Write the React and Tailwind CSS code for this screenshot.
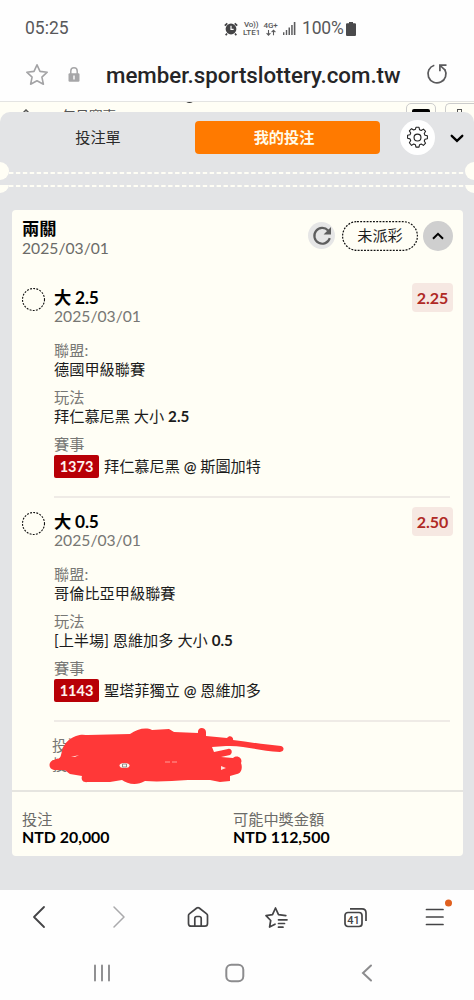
import React from "react";

const Row = ({ h, className = "", children }) => (
  <div className={`flex items-center whitespace-nowrap leading-none ${h} ${className}`}>{children}</div>
);

function StatusBar() {
  return (
    <div className="flex h-[57px] items-center pl-[25px] pr-[118px] font-['Roboto'] text-[#58585a]">
      <span className="pt-[1px] text-[17.500px] leading-none">05:25</span>
      <div className="ml-auto flex items-center">
        <svg width="14" height="14" viewBox="0 0 14 14" className="mr-[5px]">
          <circle cx="7" cy="7" r="5.4" fill="#444446" />
          <path d="M.8 3.6 3.3 1.3M13.2 3.6l-2.5-2.3M3 11.5l-1.3 1.7M11 11.5l1.3 1.7" stroke="#444446" strokeWidth="1.7" fill="none" />
          <path d="M7 3.8v3.5h2.6" stroke="#fff" strokeWidth="1.2" fill="none" />
        </svg>
        <div className="w-[20px] whitespace-nowrap text-[8px] font-medium leading-[8px]">
          <div className="pl-[1px] tracking-[-0.2px]">Vo))</div>
          <div>LTE1</div>
        </div>
        <div className="flex w-[15px] flex-col items-center text-[8px] font-medium leading-[7px] tracking-[-0.2px]">
          <div>4G+</div>
          <svg width="10" height="7" viewBox="0 0 10 7" fill="none" stroke="#58585a" strokeWidth="1.1">
            <path d="M2.5 1v5M.6 4.2l1.9 1.9 1.9-1.9M7.5 6.3v-5M5.6 3.1l1.9-1.9 1.9 1.9" />
          </svg>
        </div>
        <svg width="13" height="13" viewBox="0 0 13 13" className="ml-[5px]" fill="#5c5c5e">
          <path d="M0 10.2h1.4V13H0zM2.8 8h1.4v5H2.8zM5.5 5.5h1.5V13H5.500zM8.2 3h1.500v10H8.200zM10.800 0h1.600v13h-1.600z" />
        </svg>
        <span className="ml-[6px] w-[43px] pt-[1px] text-[17.500px] leading-none tracking-[-0.200px]">100%</span>
        <svg width="10" height="14" viewBox="0 0 9 14" className="ml-[1px]" fill="#4a4a4c" preserveAspectRatio="none">
          <path d="M2.700 0h3.600v1.300H8a1 1 0 0 1 1 1V13a1 1 0 0 1-1 1H1a1 1 0 0 1-1-1V2.300a1 1 0 0 1 1-1h1.700z" />
        </svg>
      </div>
    </div>
  );
}

function AddressBar() {
  return (
    <div className="flex h-[45px] items-start border-b border-[#e4e4e2] pl-[25px]">
      <svg width="24" height="24" viewBox="0 0 24 24" className="mt-[6px]" fill="none" stroke="#a3a3a5" strokeWidth="1.6" strokeLinejoin="round">
        <path d="m12 1.800 3 6.600 7.200.800-5.300 4.900 1.500 7.100L12 17.700l-6.400 3.500 1.500-7.100-5.300-4.900 7.200-.8z" />
      </svg>
      <svg width="12" height="15" viewBox="0 0 12 15" className="ml-[19px] mt-[10px]">
        <path d="M2.800 7V4a3.200 3.200 0 0 1 6.400 0v3" fill="none" stroke="#a6a6a8" strokeWidth="1.500" />
        <rect x="0.500" y="6.300" width="11" height="8.500" rx="1.200" fill="#a6a6a8" />
        <path d="M6 8.500v4" stroke="#fff" strokeWidth="1.400" />
      </svg>
      <span className="ml-[26px] w-[295px] whitespace-nowrap font-['Roboto'] text-[22.300px] font-medium leading-[37px] text-[#252527]">member.sportslottery.com.tw</span>
      <svg width="22" height="22" viewBox="0 0 22 22" className="ml-[25px] mt-[6px]" fill="none" stroke="#5a5a5c" strokeWidth="1.700">
        <path d="M8.300 2.300A9 9 0 1 0 18.800 6.500" />
        <path d="M20.500 2.200h-6.600v6M14.200 2.500l4.900 4.600" />
      </svg>
    </div>
  );
}

function PageStrip() {
  return (
    <div className="relative h-[30px] bg-[#fffef5]">
      <div className="absolute left-[184px] top-0 h-[2px] w-[11px] overflow-hidden">
        <div className="-mt-[11px] h-[12px] w-[11px] rounded-full bg-[#333]" />
      </div>
      <svg width="12" height="6" viewBox="0 0 12 6" className="absolute left-[20px] top-[7px]" fill="none" stroke="#555" strokeWidth="1.500">
        <path d="m1 6 5-5 5 5" />
      </svg>
      <span className="absolute left-[62px] top-[6px] text-[13.500px] leading-[16px] text-[#555]">每日賽事</span>
      <div className="absolute left-[406px] top-[1px] h-[26px] w-[30px] rounded-[5px] border border-[#ccc] px-[5px] pt-[5px]">
        <div className="h-[8px] w-[18px] rounded-[2px] bg-black" />
      </div>
      <div className="absolute left-[445px] top-[1px] h-[26px] w-[29px] rounded-l-[5px] border border-r-0 border-[#ccc] pl-[11px] pt-[5px]">
        <div className="h-[8px] w-[5px] border border-[#555]" />
      </div>
    </div>
  );
}

function Dashes() {
  return (
    <svg width="474" height="2" viewBox="0 0 474 2" className="block">
      <path d="M9 1H465" stroke="#fffef5" strokeWidth="2" strokeDasharray="4.400 2.520" />
    </svg>
  );
}

function Tabs() {
  return (
    <div className="flex h-[50px] items-center">
      <div className="w-[195px] pl-[1px] pt-[1px] text-center text-[15.200px] leading-none text-[#2b2b2b]">投注單</div>
      <div className="flex h-[33px] w-[185px] items-center justify-center rounded-[4px] bg-[#ff7a00] pr-[7px] pt-[1px] text-[15.200px] font-bold leading-none text-[#fffbe8]">我的投注</div>
      <div className="ml-[20px] flex h-[35px] w-[35px] items-center justify-center rounded-full bg-white">
        <svg width="23" height="23" viewBox="0 0 24 24" fill="none" stroke="#222" strokeWidth="1.200" strokeLinejoin="round">
          <circle cx="12" cy="12" r="3.600" />
          <path d="M10.300 1.800h3.400l.6 2.700 1.900.8 2.400-1.500 2.400 2.400-1.500 2.400.8 1.900 2.700.6v3.400l-2.700.6-.8 1.900 1.500 2.400-2.400 2.400-2.400-1.500-1.900.8-.6 2.700h-3.400l-.6-2.700-1.900-.8-2.400 1.500L3 18.900l1.500-2.400-.8-1.900-2.700-.6v-3.400l2.700-.6.800-1.900L3 5.700l2.400-2.400 2.400 1.500 1.900-.8z" transform="translate(.7 -.3) scale(.94)" />
        </svg>
      </div>
      <svg width="14" height="9" viewBox="0 0 14 9" className="ml-[15px] mt-[2px]" fill="none" stroke="#000" strokeWidth="2.300" strokeLinecap="round">
        <path d="m1.700 1.800 5.300 5 5.300-5" />
      </svg>
    </div>
  );
}

function Perforation() {
  return (
    <div className="relative h-[48px] overflow-hidden pt-[10px]">
      <div className="absolute -left-[9px] top-0 h-[18px] w-[18px] rounded-full bg-[#fffef5]" />
      <div className="absolute -right-[9px] top-0 h-[18px] w-[18px] rounded-full bg-[#fffef5]" />
      <Dashes />
      <div className="relative mt-[11px] h-[12px] overflow-hidden">
        <div className="absolute -left-[9px] -top-[10px] h-[18px] w-[18px] rounded-full bg-[#fffef5]" />
        <div className="absolute -right-[9px] -top-[10px] h-[18px] w-[18px] rounded-full bg-[#fffef5]" />
        <Dashes />
      </div>
    </div>
  );
}

function CardHeader() {
  return (
    <div className="flex h-[66px] pl-[10px] pr-[10px]">
      <div className="pt-[9px]">
        <Row h="h-[20px]" className="text-[17.300px] font-bold text-black">兩關</Row>
        <Row h="h-[19px]" className="text-[15.700px] text-[#6b6b68]">2025/03/01</Row>
      </div>
      <div className="ml-auto flex h-[51px] items-center">
        <div className="flex h-[27px] w-[27px] items-center justify-center rounded-full bg-[#e6e6e6]">
          <svg width="20" height="20" viewBox="0 0 20 20">
            <path d="M17.800 12.200a7.900 7.900 0 1 1-1.700-7.700" fill="none" stroke="#5e5e5e" strokeWidth="2.200" />
            <path d="M19 1v7.400h-7.400z" fill="#5e5e5e" />
          </svg>
        </div>
        <div className="relative ml-[7px] flex h-[30px] w-[76px] items-center justify-center text-[15.200px] leading-none text-[#1c1c1c]">
          <svg width="76" height="30" viewBox="0 0 76 30" className="absolute inset-0">
            <rect x=".6" y=".6" width="74.800" height="28.800" rx="14.400" fill="none" stroke="#111" strokeWidth="1.200" strokeDasharray="1.900 1.300" />
          </svg>
          未派彩
        </div>
        <div className="ml-[5px] flex h-[30px] w-[30px] items-center justify-center rounded-full bg-[#cfcfcf]">
          <svg width="12" height="8" viewBox="0 0 12 8" fill="none" stroke="#000" strokeWidth="2">
            <path d="m1 6.800 5-5 5 5" />
          </svg>
        </div>
      </div>
    </div>
  );
}

function Leg({ line, odds, league, market, code, match }) {
  return (
    <div className="flex h-[224px] pl-[10px] pr-[10px] pt-[10px]">
      <svg width="24" height="24" viewBox="0 0 24 24" className="mt-[2px] shrink-0">
        <circle cx="11.500" cy="11.500" r="11" fill="none" stroke="#111" strokeWidth="1.100" strokeDasharray="1.900 1.300" />
      </svg>
      <div className="ml-[8px] w-[396px] text-[15.200px] text-[#1c1c1c]">
        <Row h="h-[22px]" className="pt-[1px] text-[17.300px] font-bold tracking-[-0.200px] text-black">大 {line}</Row>
        <Row h="h-[18px]" className="text-[15.700px] text-[#777774]">2025/03/01</Row>
        <Row h="h-[19px]" className="mt-[15px] text-[#777774]">聯盟:</Row>
        <Row h="h-[19px]">{league}</Row>
        <Row h="h-[19px]" className="mt-[9px] text-[#777774]">玩法</Row>
        <Row h="h-[19px]"><span>{market} <b>{line}</b></span></Row>
        <Row h="h-[19px]" className="mt-[9px] text-[#777774]">賽事</Row>
        <Row h="h-[24px]" className="pt-[1px]">
          <span className="mr-[5px] flex h-[23px] w-[45px] items-center justify-center rounded-[2px] bg-[#b80006] pt-[1px] text-[14.500px] font-bold text-[#fff3ee]">{code}</span>
          <span className="pt-[1px] tracking-[-0.030px]">{match[0]} <span className="font-semibold">@</span> {match[1]}</span>
        </Row>
        <div className="mt-[18px] h-[2px] bg-[#efebe6]" />
      </div>
      <div className="-ml-[38px] -mt-[3px] flex h-[29px] w-[41px] shrink-0 items-center justify-center rounded-[4px] bg-[#f6e8e2] text-[16px] font-bold leading-none text-[#b02a25]">{odds}</div>
    </div>
  );
}

function Redacted() {
  return (
    <div className="relative h-[66px] pl-[40px] pt-[12px] text-[15.200px] text-[#777774]">
      <Row h="h-[19px]">投注</Row>
      <Row h="h-[19px]">投</Row>
      <svg width="240" height="60" viewBox="48 725 240 60" className="absolute left-[36px] top-[1px]">
        <path d="M54 760C57 758 60 760 61 755C63 744 68 739 76 736C81 734 85 735 88 735L130 734C137 729 146 727 152 730L169 729L174 732L198 733C197 726 206 727 206 732L206 736L227 738C230 734 234 738 233 740C250 742 266 745 281 746C285 747 284 752 280 752C258 751 244 745 226 746L212 747L214 752L228 749C232 748 233 753 230 755L221 757L233 758C238 754 243 759 241 763C243 768 241 774 237 774L230 776L230 781L220 782L210 780L188 780C172 781 158 782 145 781C137 786 127 784 122 780L110 782L88 782C82 783 81 779 82 776L70 774C67 772 67 771 64 770L54 770C48 769 48 761 54 760Z" fill="#ff3838" />
        <ellipse cx="124.500" cy="765.500" rx="5" ry="2.500" fill="#fff6ef" />
        <path d="M122.500 764v3M126.500 764v3M122.500 764h4M122.500 767h4" stroke="#777" strokeWidth=".8" />
        <path d="m71 757 8-2-4 2zM221 766l5 2-5 2z" fill="#ffe0da" />
        <path d="M165 762h5M172 762h5" stroke="#ff9d98" strokeWidth="1" />
      </svg>
    </div>
  );
}

function BrowserNav() {
  return (
    <div className="grid h-[54px] grid-cols-[77px_84px_73px_84px_76px_82px] items-center justify-items-center">
      <svg width="14" height="24" viewBox="0 0 14 24" fill="none" stroke="#444446" strokeWidth="1.800" strokeLinecap="round" strokeLinejoin="round"><path d="M12 2 2 12l10 10" /></svg>
      <svg width="14" height="24" viewBox="0 0 14 24" fill="none" stroke="#aaaaac" strokeWidth="1.500" strokeLinecap="round" strokeLinejoin="round"><path d="m2 2 10 10L2 22" /></svg>
      <svg width="22" height="22" viewBox="0 0 22 22" fill="none" stroke="#444446" strokeWidth="1.700" strokeLinejoin="round">
        <path d="M1.500 9.500q0-1 .8-1.600L9.800 2q1.200-.9 2.400 0l7.500 5.900q.8.600.8 1.600v8q0 2.700-2.700 2.700H4.200q-2.700 0-2.700-2.700z" />
        <path d="M7.800 20v-7.500q0-2 2-2h2.400q2 0 2 2V20" />
      </svg>
      <svg width="24" height="24" viewBox="0 0 24 24" fill="none" stroke="#444446" strokeWidth="1.700" strokeLinejoin="round" strokeLinecap="round">
        <path d="M11 19.200 5.600 22l1.100-6.500L2 10.600l6.500-1L11.500 3l3 6.600 7.300 1" />
        <path d="M14.500 14.800h8.500M14.500 18.500h6M14.500 22.200h4.500" />
      </svg>
      <svg width="26" height="24" viewBox="0 0 26 24" fill="none" stroke="#444446" strokeWidth="1.700">
        <rect x="2" y="7.500" width="17" height="14" rx="3" />
        <path d="M7 3.800h12q4 0 4 4V16" />
        <text x="10.500" y="18.500" textAnchor="middle" fontFamily="Roboto" fontSize="11" fontWeight="500" fill="#444446" stroke="none">41</text>
      </svg>
      <svg width="34" height="36" viewBox="0 0 34 36" fill="none" stroke="#444446" strokeWidth="1.700" strokeLinecap="round">
        <path d="M8.500 10.500h16.500M8.500 18h16.500M8.500 25.500h16.500" />
        <circle cx="30.500" cy="4" r="3.500" fill="#e0601f" stroke="none" />
      </svg>
    </div>
  );
}

function SystemNav() {
  return (
    <div className="grid h-[58px] grid-cols-[204px_61px_204px] items-center justify-items-center">
      <svg width="18" height="18" viewBox="0 0 18 18" stroke="#8c8c8e" strokeWidth="1.900" strokeLinecap="round"><path d="M2 1.500v15M9 1.500v15M16 1.500v15" /></svg>
      <svg width="20" height="20" viewBox="0 0 20 20" fill="none" stroke="#8c8c8e" strokeWidth="2"><rect x="1.300" y="1.800" width="17" height="16.500" rx="5" /></svg>
      <svg width="12" height="18" viewBox="0 0 12 18" fill="none" stroke="#8c8c8e" strokeWidth="2" strokeLinecap="round"><path d="M10 1.500 2 9l8 7.500" /></svg>
    </div>
  );
}

export default function App() {
  return (
    <div className="h-[1000px] w-[474px] overflow-hidden bg-[#fefefe] font-['Lato','Noto_Sans_CJK_TC',sans-serif]">
      <StatusBar />
      <AddressBar />
      <PageStrip />
      <div className="relative -mt-[20px] h-[778px] rounded-t-[10px] bg-[#e3e4e6]">
        <Tabs />
        <Perforation />
        <div className="ml-[12px] h-[646px] w-[451px] rounded-[4px] bg-[#fffef5]">
          <CardHeader />
          <Leg line="2.5" odds="2.25" league="德國甲級聯賽" market="拜仁慕尼黑 大小" code="1373" match={["拜仁慕尼黑", "斯圖加特"]} />
          <Leg line="0.5" odds="2.50" league="哥倫比亞甲級聯賽" market="[上半場] 恩維加多 大小" code="1143" match={["聖塔菲獨立", "恩維加多"]} />
          <Redacted />
          <div className="flex h-[66px] border-t-2 border-[#e6e5e0] pl-[10px] pt-[18px] text-[15.200px]">
            <div className="w-[211px]">
              <Row h="h-[19px]" className="text-[#6b6b68]">投注</Row>
              <Row h="h-[16px]" className="text-[15.900px] font-bold text-black">NTD 20,000</Row>
            </div>
            <div>
              <Row h="h-[19px]" className="text-[#6b6b68]">可能中獎金額</Row>
              <Row h="h-[16px]" className="text-[15.900px] font-bold text-black">NTD 112,500</Row>
            </div>
          </div>
        </div>
      </div>
      <BrowserNav />
      <SystemNav />
    </div>
  );
}
